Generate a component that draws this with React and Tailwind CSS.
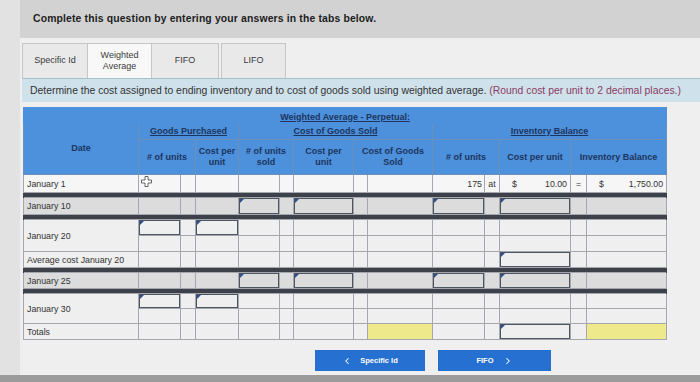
import { ChevronLeft, ChevronRight } from 'lucide-react';

const COLS = [115, 42, 15, 43, 41, 14, 60, 14, 65, 52, 15, 71, 16, 80];

const line = 'border border-[#a4a8ae]';

const Corner = () => (
  <svg width="4" height="4" viewBox="0 0 4 4" className="absolute left-0 top-0">
    <polygon points="0,0 4,0 0,4" fill="#2d4f8f" />
  </svg>
);

// one body cell; kind: p plain, i input box, y yellow, or text values
const Cell = ({ c, h }) => {
  if (c === 'i') {
    return (
      <td className={`${line} p-0`}>
        <div className={`relative ${h} border border-[#4d5561]`}>
          <Corner />
        </div>
      </td>
    );
  }
  if (c === 'y') {
    return (
      <td className={`${line} p-0`}>
        <div className={`${h} bg-[#eeea8c]`} />
      </td>
    );
  }
  if (c && c.dollar) {
    return (
      <td className={`${line} px-[3px]`}>
        <div className="flex justify-between">
          <span className="pl-[9px]">$</span>
          <span>{c.dollar}</span>
        </div>
      </td>
    );
  }
  if (c && c.t) {
    return <td className={`${line} px-[2px] ${c.center ? 'text-center' : 'text-right'}`}>{c.t}</td>;
  }
  return <td className={`${line} p-0`}><div className={h} /></td>;
};

const Bar = () => (
  <tr>
    <td colSpan={14} className="h-[5px] bg-[#3d424a] p-0 border-x border-[#3d424a]" />
  </tr>
);

const P = 'p';
const I = 'i';
const Y = 'y';
const rowTen = [P, P, P, I, P, I, P, P, I, P, I, P, P];
const rowBuy = [I, P, I, P, P, P, P, P, P, P, P, P, P];
const rowNone = [P, P, P, P, P, P, P, P, P, P, P, P, P];

const Row = ({ label, cells, h, bg, span }) => (
  <tr className={bg}>
    {label !== undefined && (
      <td rowSpan={span || 1} className={`${line} pl-[3px] text-left`}>{label}</td>
    )}
    {cells.map((c, i) => (
      <Cell key={i} c={c} h={h} />
    ))}
  </tr>
);

export default function App() {
  const hd = 'border border-[#6e8fb8] font-bold text-[#1c3560] leading-[11px]';
  return (
    <div className="w-[700px] h-[382px] overflow-hidden bg-[#e2e2e2] flex flex-col font-['Liberation_Sans',Arial,sans-serif] text-[#2b2b2b]">
      <div className="ml-[20px] flex-1 bg-[#efefef] flex flex-col">
        {/* Banner */}
        <div className="h-[38px] bg-[#d2d2d2] pl-[13px] flex items-center text-[10.4px] font-bold text-[#1d1d1d] tracking-[0.15px]">
          Complete this question by entering your answers in the tabs below.
        </div>

        {/* Tabs */}
        <div className="mt-[5px] ml-[2px] flex h-[35px] text-[9px] text-[#3a3a3a]">
          <div className="w-[66px] border border-b-0 border-[#c6c6c6] bg-[#e9e9e9] flex items-center justify-center">Specific Id</div>
          <div className="w-[64px] border-t border-r border-[#c6c6c6] bg-[#f8f8f8] flex items-center justify-center text-center leading-[11px]">
            Weighted<br />Average
          </div>
          <div className="w-[67px] border-t border-r border-[#c6c6c6] bg-[#e9e9e9] flex items-center justify-center">FIFO</div>
          <div className="ml-[2px] w-[65px] border-t border-x border-[#c6c6c6] bg-[#e9e9e9] flex items-center justify-center">LIFO</div>
        </div>

        {/* Instruction */}
        <div className="ml-[2px] h-[24px] border-t border-[#a9bfcc] bg-[#cfe2ec] pl-[8px] flex items-center text-[10.4px] text-[#333] whitespace-nowrap">
          Determine the cost assigned to ending inventory and to cost of goods sold using weighted average.&nbsp;
          <span className="text-[#8c3b62]">(Round cost per unit to 2 decimal places.)</span>
        </div>

        {/* Table */}
        <div className="mt-[5px] ml-[3px] w-[643px]">
          <table className="w-[643px] table-fixed border-collapse text-[8.8px] leading-[10px]">
            <colgroup>
              {COLS.map((w, i) => (
                <col key={i} style={{ width: w }} />
              ))}
            </colgroup>
            <thead className="bg-[#4d90db] text-center text-[9px]">
              <tr className="h-[16px]">
                <th colSpan={14} className="border border-[#4d90db] font-bold text-[#1c3560] pt-[2px]">
                  <span className="underline underline-offset-1">Weighted Average - Perpetual:</span>
                </th>
              </tr>
              <tr className="h-[16px]">
                <th rowSpan={2} className={`${hd} align-middle pb-[2px]`}>Date</th>
                <th colSpan={3} className={hd}><span className="underline underline-offset-1">Goods Purchased</span></th>
                <th colSpan={5} className={hd}><span className="underline underline-offset-1">Cost of Goods Sold</span></th>
                <th colSpan={5} className={hd}><span className="underline underline-offset-1">Inventory Balance</span></th>
              </tr>
              <tr className="h-[35px]">
                <th colSpan={2} className={hd}># of units</th>
                <th className={hd}>Cost per unit</th>
                <th colSpan={2} className={hd}># of units sold</th>
                <th className={hd}>Cost per<br />unit</th>
                <th colSpan={2} className={hd}>Cost of Goods Sold</th>
                <th colSpan={2} className={hd}># of units</th>
                <th className={hd}>Cost per unit</th>
                <th colSpan={2} className={hd}>Inventory Balance</th>
              </tr>
            </thead>
            <tbody className="text-[#333]">
              <tr className="bg-[#f6f6f6]">
                <td className={`${line} pl-[3px] h-[18px]`}>January 1</td>
                <td className={`${line} p-0 relative`}>
                  <svg width="11" height="11" viewBox="0 0 11 11" className="absolute left-[2px] top-[1px]">
                    <path d="M4 0.5h3v3.5h3.5v3h-3.5v3.5h-3v-3.5h-3.5v-3h3.5z" fill="#fff" stroke="#444" strokeWidth="0.8" />
                  </svg>
                </td>
                {[P, P, P, P, P, P, P].map((c, i) => (
                  <Cell key={i} c={c} h="h-[17px]" />
                ))}
                <Cell c={{ t: '175' }} />
                <Cell c={{ t: 'at', center: true }} />
                <Cell c={{ dollar: '10.00' }} />
                <Cell c={{ t: '=', center: true }} />
                <Cell c={{ dollar: '1,750.00' }} />
              </tr>
              <Bar />
              <Row label="January 10" cells={rowTen} h="h-[16px]" bg="bg-[#dcdcdc]" />
              <Bar />
              <Row label="January 20" span={2} cells={rowBuy} h="h-[15px]" bg="bg-[#efefef]" />
              <Row cells={rowNone} h="h-[15px]" bg="bg-[#efefef]" />
              <Row label="Average cost January 20" cells={[P, P, P, P, P, P, P, P, P, P, I, P, P]} h="h-[15px]" bg="bg-[#efefef]" />
              <Bar />
              <Row label="January 25" cells={rowTen} h="h-[15px]" bg="bg-[#dcdcdc]" />
              <Bar />
              <Row label="January 30" span={2} cells={rowBuy} h="h-[14px]" bg="bg-[#efefef]" />
              <Row cells={rowNone} h="h-[14px]" bg="bg-[#efefef]" />
              <Row label="Totals" cells={[P, P, P, P, P, P, P, Y, P, P, I, P, Y]} h="h-[15px]" bg="bg-[#efefef]" />
            </tbody>
          </table>
        </div>

        {/* Navigation */}
        <div className="mt-[10px] ml-[295px] flex gap-[13px] text-[7.5px] font-bold text-white">
          <div className="w-[110px] h-[21px] bg-[#2670d2] flex items-center justify-center gap-[8px]">
            <ChevronLeft size={10} strokeWidth={2.5} />
            <span>Specific Id</span>
          </div>
          <div className="w-[113px] h-[21px] bg-[#2670d2] flex items-center justify-center gap-[9px]">
            <span>FIFO</span>
            <ChevronRight size={10} strokeWidth={2.5} />
          </div>
        </div>
      </div>
      <div className="h-[7px] bg-[#9b9b9b]" />
    </div>
  );
}
